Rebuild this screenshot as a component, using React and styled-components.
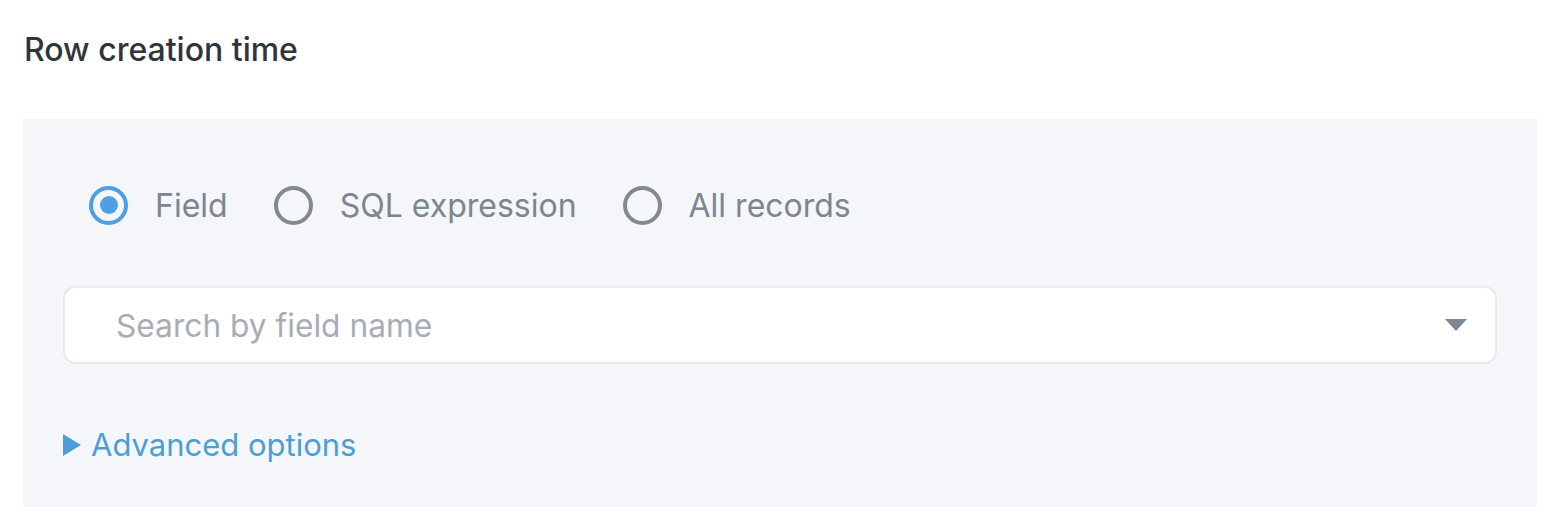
import styled, { createGlobalStyle } from "styled-components";

const Global = createGlobalStyle`
  body {
    margin: 0;
    background: #ffffff;
    font-family: Inter, "Noto Sans", sans-serif;
  }
`;

const Page = styled.div`
  width: 1562px;
  height: 528px;
  box-sizing: border-box;
  padding: 0 25px 21px 23px;
  display: flex;
  flex-direction: column;
`;

const Title = styled.h2`
  margin: 0;
  height: 119px;
  box-sizing: border-box;
  padding: 30px 0 0 1px;
  font-size: 32px;
  font-weight: 500;
  color: #2e353b;
`;

const Panel = styled.div`
  flex: 1;
  background: #f5f6fa;
  padding: 66px 40px 0 40px;
  box-sizing: border-box;
`;

const RadioRow = styled.div`
  display: flex;
  align-items: center;
  gap: 46px;
  padding-left: 26px;
  height: 40px;
`;

const RadioItem = styled.label`
  display: flex;
  align-items: center;
  gap: 27px;
  font-size: 32px;
  color: #7c8690;
`;

const Circle = styled.span`
  width: 39px;
  height: 39px;
  box-sizing: border-box;
  border-radius: 50%;
  border: 4px solid ${(p) => (p.$checked ? "#509ee3" : "#82898f")};
  display: flex;
  align-items: center;
  justify-content: center;

  &::after {
    content: "";
    width: 18px;
    height: 18px;
    border-radius: 50%;
    background: #509ee3;
    display: ${(p) => (p.$checked ? "block" : "none")};
  }
`;

const Select = styled.div`
  margin-top: 61px;
  height: 78px;
  box-sizing: border-box;
  background: #ffffff;
  border: 2px solid #e6e9ee;
  border-radius: 12px;
  display: flex;
  align-items: center;
  justify-content: space-between;
  padding: 0 28px 0 51px;
`;

const Placeholder = styled.span`
  font-size: 31.7px;
  color: #a8adb3;
`;

const Caret = styled.span`
  width: 0;
  height: 0;
  border-left: 11px solid transparent;
  border-right: 11px solid transparent;
  border-top: 12px solid #7c8690;
`;

const Advanced = styled.div`
  margin-top: 62px;
  display: flex;
  align-items: center;
  gap: 10px;
  color: #4c9fd6;
  font-size: 31px;
`;

const Arrow = styled.span`
  width: 0;
  height: 0;
  border-top: 11px solid transparent;
  border-bottom: 11px solid transparent;
  border-left: 18px solid #4c9fd6;
`;

const options = [
  { label: "Field", checked: true },
  { label: "SQL expression" },
  { label: "All records" },
];

export default function App() {
  return (
    <>
      <Global />
      <Page>
        <Title>Row creation time</Title>
        <Panel>
          <RadioRow>
            {options.map((o) => (
              <RadioItem key={o.label}>
                <Circle $checked={o.checked} />
                {o.label}
              </RadioItem>
            ))}
          </RadioRow>
          <Select>
            <Placeholder>Search by field name</Placeholder>
            <Caret />
          </Select>
          <Advanced>
            <Arrow />
            Advanced options
          </Advanced>
        </Panel>
      </Page>
    </>
  );
}
